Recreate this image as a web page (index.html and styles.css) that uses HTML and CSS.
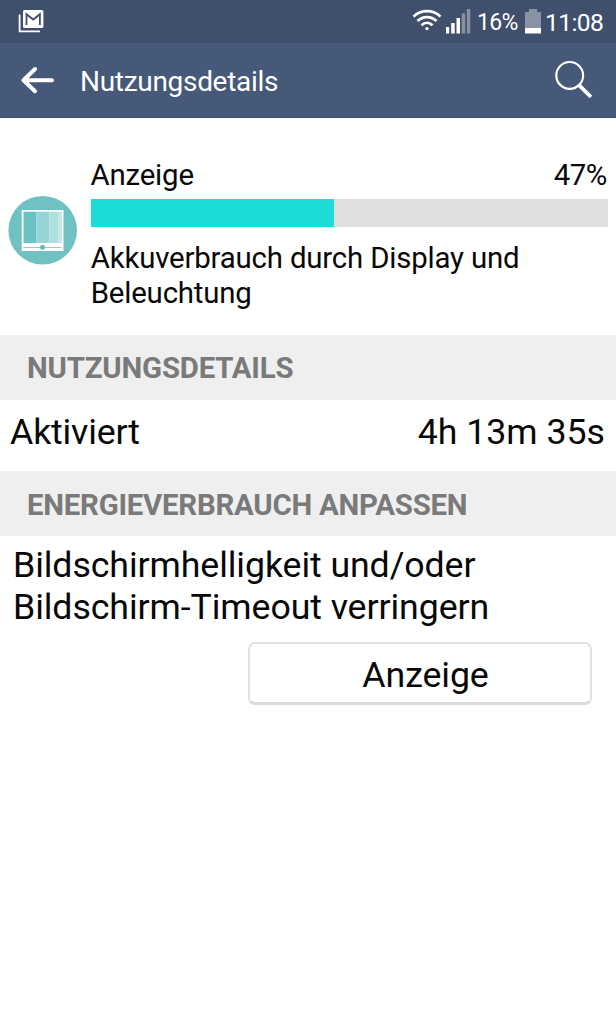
FILE: index.html
```html
<!DOCTYPE html>
<html lang="de">
<head>
<meta charset="utf-8">
<title>Nutzungsdetails</title>
<link rel="stylesheet" href="styles.css">
</head>
<body>
<div class="statusbar">
  <svg class="mail" width="27" height="24" viewBox="0 0 27 24">
    <path d="M1.6 5.5V22.3H22" fill="none" stroke="#fff" stroke-width="1.8"/>
    <rect x="5" y="1" width="20.4" height="18" rx="1.5" fill="#fff"/>
    <path d="M8.5 16V5.2L15.2 10.5 21.9 5.2V16" fill="none" stroke="#40506c" stroke-width="1.8"/>
  </svg>
  <svg class="wifi" width="30" height="24" viewBox="0 0 30 24" fill="none" stroke="#fff" stroke-width="2.7">
    <path d="M1.5 7.6C9 .3 21 .3 28.5 7.6M5.5 12C11 6.7 19 6.7 24.5 12M9.5 16.2C12.8 13 17.2 13 20.5 16.2"/>
    <circle cx="15" cy="19.6" r="1.7" fill="#fff" stroke="none"/>
  </svg>
  <svg class="signal" width="25" height="25" viewBox="0 0 25 25" fill="#fff">
    <path d="M0 18h3.2v6.5H0zM5.2 14h3.5v10.5H5.2zM10.5 9h3.5v15.5H10.5z"/>
    <path d="M15.7 4.5h3.5v20H15.7zM20.8 0h3.5v24.5H20.8z" fill="#8791a3"/>
  </svg>
  <span class="percent">16%</span>
  <svg class="battery" width="16" height="25" viewBox="0 0 16 25">
    <path d="M0 3H4V0H12V3H16V19H0z" fill="#8993a5"/>
    <path d="M0 19H16V24.5H0z" fill="#fff"/>
  </svg>
  <span class="clock">11:08</span>
</div>
<header class="appbar">
  <svg class="back" width="34" height="28" viewBox="0 0 34 28" fill="none" stroke="#fff" stroke-width="4" stroke-linecap="round" stroke-linejoin="round">
    <path d="M15 3 3.5 14.2 15 25.2M4 14.2H32"/>
  </svg>
  <h1 class="title">Nutzungsdetails</h1>
  <svg class="search" width="40" height="40" viewBox="0 0 40 40" fill="none" stroke="#fff">
    <circle cx="15.7" cy="15.4" r="13.4" stroke-width="2.2"/>
    <path d="M25 25.2 37 37" stroke-width="3.8"/>
  </svg>
</header>
<main>
  <section class="usage">
    <svg class="app-icon" width="70" height="70" viewBox="0 0 70 70">
      <circle cx="34.7" cy="35.3" r="34.3" fill="#6fc1c2"/>
      <path d="M13.7 15H55.5V56H13.7z" fill="#fff"/>
      <path d="M15.5 16.7H28.2V48H15.5z" fill="#6bc2c4"/>
      <path d="M28.2 16.7H41.5V48H28.2z" fill="#98d4d6"/>
      <path d="M41.5 16.7H50V48H41.5z" fill="#b0dfe0"/>
      <path d="M50 16.7H54V48H50z" fill="#c5e9e9"/>
      <path d="M15.5 52.5H53.5" stroke="#92cccd" stroke-width="1"/>
      <circle cx="34.5" cy="52.3" r="2.5" fill="#62bdbf"/>
    </svg>
    <div class="usage-body">
      <div class="usage-head"><span class="usage-name">Anzeige</span><span class="usage-value">47%</span></div>
      <div class="meter"><div class="meter-fill" style="width:47%"></div></div>
      <p class="description">Akkuverbrauch durch Display und<br>Beleuchtung</p>
    </div>
  </section>
  <h2 class="section-title">NUTZUNGSDETAILS</h2>
  <div class="row"><span class="row-name">Aktiviert</span><span class="row-value">4h 13m 35s</span></div>
  <h2 class="section-title adjust">ENERGIEVERBRAUCH ANPASSEN</h2>
  <p class="advice">Bildschirmhelligkeit und/oder<br>Bildschirm-Timeout verringern</p>
  <button class="button">Anzeige</button>
</main>
</body>
</html>
```
FILE: styles.css
```css
* { box-sizing: border-box; }
body { margin: 0; background: #fff; color: #080808; font-family: Roboto, sans-serif; }
h1, h2, p { margin: 0; font-weight: 400; }
svg { display: block; flex: none; }

.statusbar { height: 43px; display: flex; align-items: flex-start; padding: 9px 12px 0 18px; background: #40506c; color: #fff; }
.wifi { margin-left: auto; margin-right: 1px; }
.signal { margin: 0 6px 0 3px; }
.percent { font-size: 23px; line-height: 27px; letter-spacing: -.7px; width: 42px; white-space: nowrap; }
.battery { margin: 0 4px 0 6px; }
.clock { font-size: 24.6px; line-height: 28px; width: 59px; white-space: nowrap; letter-spacing: -.6px; }

.appbar { height: 75px; display: flex; align-items: flex-start; padding: 17px 22px 0 20px; background: #465979; border-bottom: 1px solid #3d4f6c; color: #fff; }
.back { margin-top: 6px; }
.title { margin-left: 26px; padding-top: 5px; font-size: 28px; line-height: 34px; letter-spacing: -.3px; white-space: nowrap; }
.search { margin-left: auto; }

.usage { height: 217px; display: flex; padding: 40px 8px 0 8px; }
.app-icon { margin-top: 37px; }
.usage-body { flex: 1; margin-left: 13px; font-size: 29.4px; line-height: 34.4px; letter-spacing: -.18px; }
.usage-head { height: 41px; display: flex; justify-content: space-between; padding-right: 1px; white-space: nowrap; }
.usage-name { margin-left: -.5px; }
.usage-value { letter-spacing: -.4px; }
.meter { height: 28px; background: #e0e0e0; }
.meter-fill { height: 28px; background: #1ddbd6; }
.description { margin: 14.4px 0 0 -.3px; white-space: nowrap; }

.section-title { height: 65px; padding: 16px 0 0 27px; background: #efefef; color: #7a7a7a; font-size: 29.4px; line-height: 34px; font-weight: 700; letter-spacing: -.2px; white-space: nowrap; }
.adjust { padding-top: 17px; letter-spacing: -.24px; }
.row { height: 71px; display: flex; justify-content: space-between; padding: 11px 11px 0 10px; font-size: 35.7px; line-height: 42px; white-space: nowrap; }
.row-name { letter-spacing: -.15px; }
.advice { padding: 9px 0 0 13px; font-size: 35.7px; line-height: 41.7px; letter-spacing: -.08px; white-space: nowrap; }
.button { display: block; width: 344px; height: 63px; margin: 14px 0 0 248px; padding: 3px 0 0 11px; border: 2px solid #e2e2e2; border-bottom: 3px solid #d9d9d9; border-radius: 7px; background: #fff; color: #080808; font: 35.7px/42px Roboto, sans-serif; letter-spacing: -.1px; }
```
